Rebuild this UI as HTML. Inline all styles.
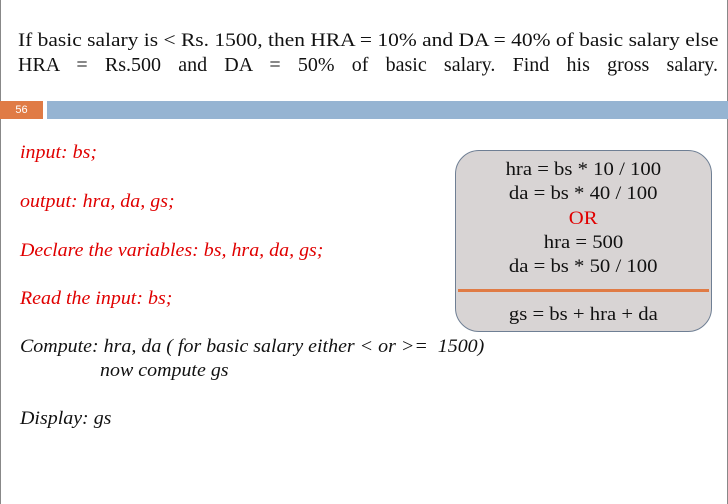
<!DOCTYPE html>
<html><head><style>
body{margin:0;width:728px;height:504px;position:relative;background:#fff;overflow:hidden;font-family:"Liberation Serif",serif;}
.bl{position:absolute;left:0;top:0;width:1px;height:504px;background:#888}
.br{position:absolute;right:0;top:0;width:1px;height:504px;background:#888}
.p{position:absolute;font-size:19px;color:#111;white-space:nowrap;transform-origin:0 0}
.r,.k{position:absolute;font-size:19px;font-style:italic;white-space:nowrap;transform:scaleX(1.05);transform-origin:0 0}
.r{color:#e00000}.k{color:#111}
.box{position:absolute;left:455px;top:150px;width:255px;height:180px;border:1.5px solid #6f7f94;border-radius:24px;background:#d8d4d4}
.b{position:absolute;left:0;width:255px;text-align:center;font-size:19px;color:#111}
.b span{display:inline-block;transform:scaleX(1.09)}
</style></head><body>
<div class="bl"></div><div class="br"></div>
<div class="p" style="left:18px;top:30px;transform:scaleX(1.13)">If basic salary is &lt; Rs. 1500, then HRA = 10% and DA = 40% of basic salary else</div>
<div class="p" style="left:18px;top:54px;width:700px;font-size:20px;text-align:justify;text-align-last:justify;white-space:normal">HRA = Rs.500 and DA = 50% of basic salary. Find his gross salary.</div>
<div style="position:absolute;left:0;top:101px;width:43px;height:18px;background:#e07b45;color:#fff;font:11px 'Liberation Sans',sans-serif;text-align:center;line-height:18px">56</div>
<div style="position:absolute;left:47px;top:101px;width:681px;height:18px;background:#96b4d2"></div>
<div class="r" style="left:20px;top:142px">input: bs;</div>
<div class="r" style="left:20px;top:191px">output: hra, da, gs;</div>
<div class="r" style="left:20px;top:240px">Declare the variables: bs, hra, da, gs;</div>
<div class="r" style="left:20px;top:288px">Read the input: bs;</div>
<div class="k" style="left:20px;top:336px">Compute: hra, da ( for basic salary either &lt; or &gt;= &nbsp;1500)</div>
<div class="k" style="left:100px;top:360px">now compute gs</div>
<div class="k" style="left:20px;top:408px">Display: gs</div>
<div class="box">
<div class="b" style="top:8px"><span>hra = bs * 10 / 100</span></div>
<div class="b" style="top:32px"><span>da = bs * 40 / 100</span></div>
<div class="b" style="top:57px;color:#e00000"><span>OR</span></div>
<div class="b" style="top:81px"><span>hra = 500</span></div>
<div class="b" style="top:105px"><span>da = bs * 50 / 100</span></div>
<div style="position:absolute;left:2px;top:138px;width:251px;height:3px;background:#e07b45"></div>
<div class="b" style="top:153px"><span>gs = bs + hra + da</span></div>
</div>
</body></html>
